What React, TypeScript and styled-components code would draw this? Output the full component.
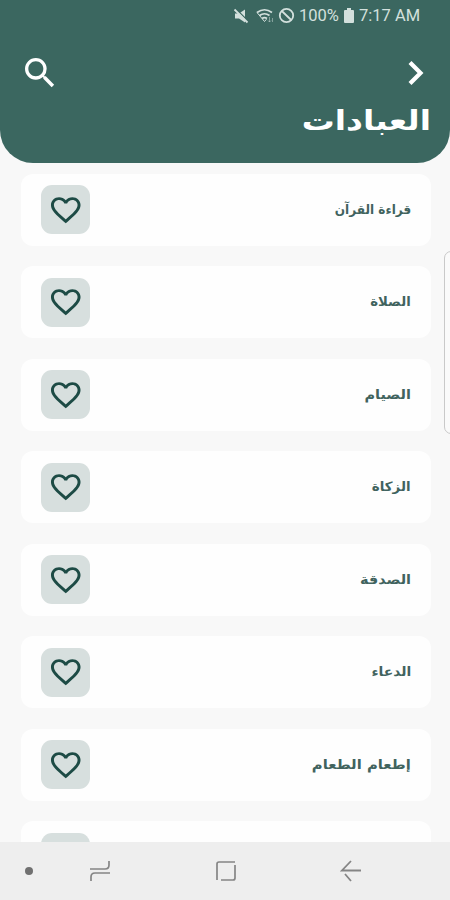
import React from "react";
import styled, { createGlobalStyle } from "styled-components";

const GlobalStyle = createGlobalStyle`
  *, *::before, *::after { box-sizing: border-box; }
  body { margin: 0; background: #f8f8f8; }
`;

const Screen = styled.div`
  position: relative;
  display: flex;
  flex-direction: column;
  width: 450px;
  height: 900px;
  overflow: hidden;
  background: #f8f8f8;
  font-family: "DejaVu Sans", sans-serif;
`;

const Header = styled.header`
  flex: none;
  height: 163px;
  background: #3b6760;
  border-radius: 0 0 33px 33px;
  color: #fff;
`;

const StatusBar = styled.div`
  display: flex;
  align-items: center;
  justify-content: flex-end;
  height: 32px;
  padding-right: 29px;
  color: #d3e0dd;
  font: 400 16.5px/32px Roboto, sans-serif;
  svg { display: block; flex: none; }
`;

const StatusText = styled.span<{ $width: number; $gap: number }>`
  width: ${(p) => p.$width}px;
  margin-left: ${(p) => p.$gap}px;
  white-space: nowrap;
`;

const Toolbar = styled.div`
  display: flex;
  align-items: center;
  justify-content: space-between;
  height: 70px;
  padding: 12px 15px 0 20px;
`;

const IconButton = styled.button`
  display: flex;
  padding: 0;
  border: 0;
  background: none;
  color: inherit;
`;

const Title = styled.h1`
  width: max-content;
  margin: 0 19px 0 auto;
  font-size: 27px;
  font-weight: 700;
  line-height: 38px;
  white-space: nowrap;
  transform: scaleX(1.22);
  transform-origin: right center;
`;

const List = styled.main`
  flex: 1;
  min-height: 0;
  display: flex;
  flex-direction: column;
  gap: 20.5px;
  padding: 10.5px 19px 0 21px;
  overflow: hidden;
`;

const Card = styled.article`
  flex: none;
  display: flex;
  align-items: center;
  justify-content: space-between;
  height: 72px;
  padding: 0 20px;
  border-radius: 12px;
  background: #fefefe;
`;

const Favorite = styled.button`
  display: flex;
  align-items: center;
  justify-content: center;
  width: 49px;
  height: 49px;
  padding: 0;
  border: 0;
  border-radius: 11px;
  background: #d7dfde;
  color: #1d4b45;
`;

const Label = styled.span<{ $stretch: number }>`
  color: #41635e;
  font-size: 13px;
  font-weight: 700;
  line-height: 20px;
  white-space: nowrap;
  transform: scaleX(${(p) => p.$stretch});
  transform-origin: right center;
`;

const EdgeHandle = styled.div`
  position: absolute;
  top: 251px;
  right: -8px;
  width: 14px;
  height: 183px;
  border: 1px solid #c9c9c9;
  border-radius: 7px;
  background: #fafafa;
`;

const NavBar = styled.nav`
  flex: none;
  display: grid;
  grid-template-columns: 58px 84px 167px 84px;
  align-items: center;
  justify-items: center;
  height: 58px;
  background: #eee;
  color: #858585;
`;

const Dot = styled.span`
  width: 8px;
  height: 8px;
  border-radius: 50%;
  background: #707070;
`;

const items = [
  { name: "قراءة القرآن", stretch: 0.93 },
  { name: "الصلاة", stretch: 1.02 },
  { name: "الصيام", stretch: 1.11 },
  { name: "الزكاة", stretch: 1.03 },
  { name: "الصدقة", stretch: 1.11 },
  { name: "الدعاء", stretch: 1.07 },
  { name: "إطعام الطعام", stretch: 1.14 },
  { name: "", stretch: 1 },
];

const Heart = () => (
  <svg width="35.500" height="34" viewBox="0 0 24 24" preserveAspectRatio="none" fill="currentColor">
    <path d="M16.5 3c-1.74 0-3.41.81-4.5 2.09C10.91 3.81 9.24 3 7.5 3 4.42 3 2 5.42 2 8.5c0 3.78 3.4 6.86 8.55 11.54L12 21.35l1.45-1.32C18.6 15.36 22 12.28 22 8.5 22 5.42 19.58 3 16.5 3zm-4.4 15.55-.1.1-.1-.1C7.14 14.24 4 11.39 4 8.5 4 6.5 5.5 5 7.5 5c1.54 0 3.04.99 3.57 2.36h1.87C13.46 5.99 14.96 5 16.5 5c2 0 3.5 1.5 3.5 3.5 0 2.89-3.14 5.74-7.9 10.05z" />
  </svg>
);

export default function App() {
  return (
    <>
      <GlobalStyle />
      <Screen>
        <Header>
          <StatusBar>
            <svg width="62" height="18" viewBox="0 0 62 18" fill="none" stroke="currentColor">
              <path d="M2 6.500h4l6-4v13l-6-4H2z" fill="currentColor" stroke="none" />
              <path d="M2.500 1.500l13 13" stroke="#3b6760" strokeWidth="1.5" />
              <path d="M1.500 2.500l13 13" strokeWidth="1.8" />
              <path d="M24 5.500q7.500-5.500 15 0M26.500 8.500q5-3.500 10 0M29 11.500q2.500-1.700 5 0" strokeWidth="1.7" />
              <path d="M24 5.500l7.500 9 2-2.300" strokeWidth="1" />
              <path d="M36.500 10v5M35 13.500l1.500 1.500 1.500-1.500M39.500 15v-4" strokeWidth=".8" opacity=".6" />
              <circle cx="53.500" cy="8.500" r="6.700" strokeWidth="1.8" />
              <path d="M48.800 4l9.400 9" strokeWidth="1.8" />
            </svg>
            <StatusText $width={41} $gap={4}>100%</StatusText>
            <svg width="18" height="16" viewBox="-4 0 18 16" fill="currentColor">
              <path d="M3 0h4v2h2q1 0 1 1v11q0 1-1 1H1q-1 0-1-1V3q0-1 1-1h2z" />
            </svg>
            <StatusText $width={62} $gap={1}>7:17 AM</StatusText>
          </StatusBar>
          <Toolbar>
            <IconButton aria-label="بحث">
              <svg width="40" height="40" viewBox="0 0 24 24" fill="currentColor">
                <path d="M15.500 14h-.79l-.28-.27A6.470 6.470 0 0 0 16 9.500 6.500 6.500 0 1 0 9.500 16c1.610 0 3.090-.59 4.230-1.570l.27.28v.79l5 4.990L20.490 19l-4.990-5zm-6 0C7.010 14 5 11.990 5 9.500S7.010 5 9.500 5 14 7.010 14 9.500 11.990 14 9.500 14z" />
              </svg>
            </IconButton>
            <IconButton aria-label="رجوع">
              <svg width="40" height="40" viewBox="0 0 40 40" fill="none" stroke="currentColor" strokeWidth="4.2">
                <path d="M15 9.500l10.500 10.500-10.500 10.500" />
              </svg>
            </IconButton>
          </Toolbar>
          <Title dir="rtl">العبادات</Title>
        </Header>
        <List>
          {items.map((item, i) => (
            <Card key={i}>
              <Favorite aria-label="المفضلة"><Heart /></Favorite>
              <Label dir="rtl" $stretch={item.stretch}>{item.name}</Label>
            </Card>
          ))}
        </List>
        <NavBar>
          <Dot />
          <svg width="22" height="24" viewBox="0 0 22 24" fill="none" stroke="currentColor" strokeWidth="1.7">
            <path d="M1 10h15q4 0 4-4V2M21 14H6q-4 0-4 4v4" />
          </svg>
          <svg width="22" height="22" viewBox="0 0 22 22" fill="none" stroke="currentColor" strokeWidth="1.7">
            <path d="M2 20V4q0-2 2-2h16M20 5v13q0 2-2 2H6" />
          </svg>
          <svg width="22" height="24" viewBox="0 0 22 24" fill="none" stroke="currentColor" strokeWidth="1.8">
            <path d="M11 2L2 11.500h19M5 15l6 7" />
          </svg>
        </NavBar>
        <EdgeHandle />
      </Screen>
    </>
  );
}
